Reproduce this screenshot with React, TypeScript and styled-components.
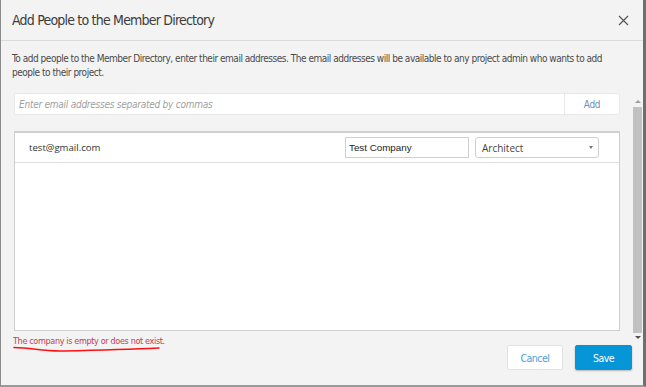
import React from 'react';
import styled, { createGlobalStyle } from 'styled-components';

const GlobalStyle = createGlobalStyle`
  html, body {
    margin: 0;
    padding: 0;
    background: #7a7a7a;
  }
  * {
    box-sizing: border-box;
  }
`;

const narrow = `"DejaVu Sans Condensed", "DejaVu Sans", sans-serif`;

const Modal = styled.div`
  position: relative;
  width: 646px;
  height: 387px;
  display: flex;
  flex-direction: column;
  background: #f3f3f3;
  border-left: 1px solid #8c8c8c;
  border-right: 3px solid #6e6e6e;
  border-bottom: 2px solid #9a9a9a;
  overflow: hidden;
`;

const Header = styled.header`
  height: 41px;
  flex: none;
  display: flex;
  align-items: center;
  justify-content: space-between;
  padding: 0 14px 0 11px;
  border-bottom: 1px solid #dcdcdc;
`;

const Title = styled.h1`
  margin: 0;
  font-family: ${narrow};
  font-weight: normal;
  font-size: 14px;
  letter-spacing: -0.8px;
  color: #3c3c3c;
`;

const CloseButton = styled.button`
  border: 0;
  background: none;
  padding: 0;
  width: 11px;
  height: 11px;
  display: flex;
  cursor: pointer;
`;

const Intro = styled.p`
  margin: 0;
  padding: 11px 12px 0 11px;
  height: 52px;
  flex: none;
  font-family: ${narrow};
  font-size: 10px;
  letter-spacing: -0.48px;
  line-height: 14px;
  color: #4a4a4a;
`;

const ScrollRegion = styled.div`
  height: 251px;
  flex: none;
  display: flex;
  gap: 12px;
  padding-left: 13px;
`;

const Content = styled.div`
  width: 606px;
  display: flex;
  flex-direction: column;
  & > * {
    flex: none;
  }
`;

const EmailBar = styled.div`
  height: 22px;
  display: flex;
  background: #fff;
  border: 1px solid #e8e8e8;
  border-radius: 2px;
`;

const EmailInput = styled.input`
  flex: 1;
  border: 0;
  outline: none;
  background: transparent;
  padding: 0 4px;
  font-family: ${narrow};
  font-style: italic;
  font-size: 10px;
  letter-spacing: -0.25px;
  color: #333;
  &::placeholder {
    color: #a0a0a0;
  }
`;

const AddButton = styled.button`
  width: 55px;
  border: 0;
  border-left: 1px solid #e8e8e8;
  background: transparent;
  font-family: ${narrow};
  font-size: 10px;
  letter-spacing: -0.3px;
  color: #6b8fb8;
  padding: 0;
`;

const Table = styled.div`
  margin-top: 16px;
  height: 200px;
  background: #fff;
  border: 1px solid #cfcfcf;
  border-top: 2px solid #cfcfcf;
`;

const Row = styled.div`
  height: 30px;
  display: flex;
  align-items: center;
  border-bottom: 1px solid #dedede;
  padding-left: 14px;
`;

const Email = styled.span`
  flex: 1;
  font-family: "Open Sans", sans-serif;
  font-size: 9.6px;
  color: #333;
`;

const CompanyInput = styled.input`
  width: 124px;
  height: 21px;
  border: 1px solid #cfcfcf;
  padding: 0 3px;
  font-family: "Liberation Sans", Arial, sans-serif;
  font-size: 9.8px;
  color: #222;
  outline: none;
`;

const RoleSelect = styled.div`
  width: 124px;
  height: 21px;
  margin: 0 20px 0 6px;
  border: 1px solid #cfcfcf;
  border-radius: 3px;
  display: flex;
  align-items: center;
  justify-content: space-between;
  padding: 0 5px 0 6px;
  font-family: "Open Sans", sans-serif;
  font-size: 10px;
  color: #444;
`;

const Caret = styled.span`
  width: 0;
  height: 0;
  border-left: 2.5px solid transparent;
  border-right: 2.5px solid transparent;
  border-top: 3px solid #777;
`;

const ErrorText = styled.div`
  margin-top: 4px;
  margin-left: -1px;
  font-family: ${narrow};
  font-size: 9px;
  letter-spacing: -0.35px;
  line-height: 12px;
  color: #c43b55;
`;

/* red hand-drawn underline marking the error, drawn over the screenshot */
const Squiggle = styled.svg`
  position: absolute;
  left: 12px;
  top: 345px;
`;

const Scrollbar = styled.div`
  width: 11px;
  display: flex;
  flex-direction: column;
  align-items: center;
  padding-top: 4px;
`;

const Arrow = styled.span<{ $down?: boolean }>`
  width: 0;
  height: 0;
  border-left: 3px solid transparent;
  border-right: 3px solid transparent;
  ${p => (p.$down ? 'border-top: 3px solid #505050;' : 'border-bottom: 3px solid #a0a0a0;')}
  margin: 3px 0 4px;
`;

const Thumb = styled.div`
  width: 9px;
  height: 226px;
  background: #c1c1c1;
`;

const Footer = styled.footer`
  flex: 1;
  display: flex;
  justify-content: flex-end;
  align-items: flex-start;
  gap: 12px;
  padding: 1px 11px 0 0;
`;

const Button = styled.button<{ $primary?: boolean }>`
  height: 25px;
  padding: 0;
  width: ${p => (p.$primary ? '57px' : '56px')};
  border-radius: 2px;
  font-family: ${narrow};
  font-size: 10.5px;
  letter-spacing: -0.5px;
  cursor: pointer;
  border: 1px solid ${p => (p.$primary ? '#0696d7' : '#e2e2e2')};
  background: ${p => (p.$primary ? '#0696d7' : '#fff')};
  color: ${p => (p.$primary ? '#fff' : '#4a9fd5')};
  box-shadow: ${p => (p.$primary ? '0 1px 2px rgba(0,0,0,0.25)' : 'none')};
`;

export default function App() {
  return (
    <>
      <GlobalStyle />
      <Modal>
        <Header>
          <Title>Add People to the Member Directory</Title>
          <CloseButton aria-label="Close">
            <svg width="11" height="11" viewBox="0 0 11 11">
              <path d="M1 1 L10 10 M10 1 L1 10" stroke="#555" strokeWidth="1.2" />
            </svg>
          </CloseButton>
        </Header>
        <Intro>
          To add people to the Member Directory, enter their email addresses. The email addresses will be
          available to any project admin who wants to add people to their project.
        </Intro>
        <ScrollRegion>
          <Content>
            <EmailBar>
              <EmailInput placeholder="Enter email addresses separated by commas" />
              <AddButton>Add</AddButton>
            </EmailBar>
            <Table>
              <Row>
                <Email>test@gmail.com</Email>
                <CompanyInput defaultValue="Test Company" />
                <RoleSelect>
                  Architect
                  <Caret />
                </RoleSelect>
              </Row>
            </Table>
            <ErrorText>The company is empty or does not exist.</ErrorText>
          </Content>
          <Scrollbar>
            <Arrow />
            <Thumb />
            <Arrow $down />
          </Scrollbar>
        </ScrollRegion>
        <Footer>
          <Button>Cancel</Button>
          <Button $primary>Save</Button>
        </Footer>
        <Squiggle width="150" height="8" viewBox="0 0 150 8">
          <path
            d="M1 2.5 C 20 3, 30 6.5, 50 6 S 110 4.5, 146 3"
            fill="none"
            stroke="#ff1010"
            strokeWidth="1.5"
            strokeLinecap="round"
          />
        </Squiggle>
      </Modal>
    </>
  );
}
